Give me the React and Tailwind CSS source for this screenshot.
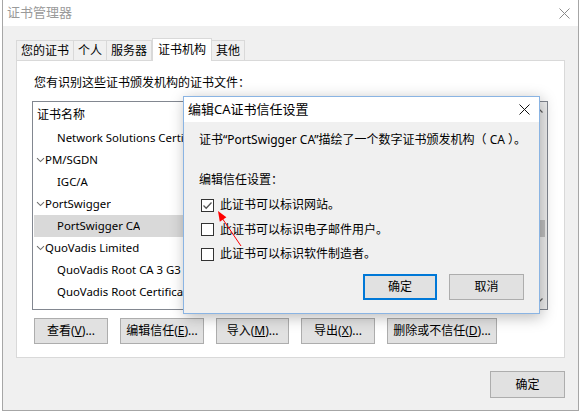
import React from "react";

const FONT = { fontFamily: '"Noto Sans", "Noto Sans CJK SC", sans-serif' };

const Chevron = () => (
  <svg width="9" height="6" viewBox="0 0 9 6" className="shrink-0">
    <path d="M1 1.2 L4.5 4.6 L8 1.2" fill="none" stroke="#707070" strokeWidth="1.1" />
  </svg>
);

const WinButton = ({ children, className = "" }) => (
  <div
    className={`flex items-center justify-center h-[26px] bg-[#e1e1e1] border border-[#adadad] text-[12px] text-black ${className}`}
  >
    {children}
  </div>
);

const rows = [
  { type: "child", label: "Network Solutions Certificate Authority" },
  { type: "parent", label: "PM/SGDN" },
  { type: "child", label: "IGC/A" },
  { type: "parent", label: "PortSwigger" },
  { type: "child", label: "PortSwigger CA", selected: true },
  { type: "parent", label: "QuoVadis Limited" },
  { type: "child", label: "QuoVadis Root CA 3 G3" },
  { type: "child", label: "QuoVadis Root Certification Authority" },
];

const tabs = ["您的证书", "个人", "服务器", "证书机构", "其他"];

const CheckRow = ({ checked, children }) => (
  <div className="flex items-center h-[24.5px] pl-[2px]">
    <div className="w-[13px] h-[13px] border border-[#333333] bg-white flex items-center justify-center">
      {checked && (
        <svg width="11" height="11" viewBox="0 0 11 11">
          <path d="M1.5 5.5 L4.2 8.2 L9.5 2.5" fill="none" stroke="#555555" strokeWidth="1.3" />
        </svg>
      )}
    </div>
    <span className="ml-[6px] text-[12px] text-black">{children}</span>
  </div>
);

export default function App() {
  return (
    <div className="relative w-[582px] h-[413px] bg-white overflow-hidden" style={FONT}>
      <div className="ml-[2px] w-[577px] h-[411px] border-x border-b border-[#a6a6a6] flex flex-col">
        {/* Title bar */}
        <div className="h-[26px] bg-white flex items-center justify-between pl-[4px] pr-[8px]">
          <span className="text-[13px] text-[#9a9a9a]">证书管理器</span>
          <svg width="11" height="11" viewBox="0 0 11 11">
            <path d="M0.5 0.5 L10.5 10.5 M10.5 0.5 L0.5 10.5" stroke="#8a8a8a" strokeWidth="1" />
          </svg>
        </div>

        {/* Body */}
        <div className="flex-1 bg-[#f0f0f0] pl-[13px] pr-[13px] pt-[12px]">
          {/* Tabs */}
          <div className="flex items-end h-[22px] relative z-10">
            {tabs.map((t) =>
              t === "证书机构" ? (
                <div
                  key={t}
                  className="h-[23px] -mb-px px-[5px] bg-white border border-b-0 border-[#d9d9d9] flex items-center text-[12px] text-black"
                >
                  {t}
                </div>
              ) : (
                <div
                  key={t}
                  className="h-[20px] px-[4px] bg-[#f0f0f0] border border-b-0 border-[#d9d9d9] -ml-px first:ml-0 flex items-center text-[12px] text-black"
                >
                  {t}
                </div>
              )
            )}
          </div>

          {/* Tab panel */}
          <div className="h-[298px] bg-white border border-[#d9d9d9] px-[15px] pt-[14px]">
            <div className="pl-[2px] text-[12px] leading-[16px] text-black">
              您有识别这些证书颁发机构的证书文件：
            </div>

            {/* Tree list */}
            <div className="mt-[10px] w-[516px] h-[209px] border border-[#828790] flex">
              <div className="flex-1 overflow-hidden">
                <div className="h-[25px] flex items-center pl-[4px] text-[12px] text-black">证书名称</div>
                {rows.map((r) =>
                  r.type === "parent" ? (
                    <div key={r.label} className="h-[22px] flex items-center pl-[3px] text-[11.4px] text-black whitespace-nowrap">
                      <Chevron />
                      <span className="max-w-[137px] overflow-hidden">{r.label}</span>
                    </div>
                  ) : (
                    <div
                      key={r.label}
                      className={`h-[22px] flex items-center pl-[23px] ml-px text-[11.4px] text-black whitespace-nowrap ${
                        r.selected ? "bg-[#d9d9d9]" : ""
                      }`}
                    >
                      <span className="max-w-[126px] overflow-hidden">{r.label}</span>
                    </div>
                  )
                )}
              </div>
              {/* Scrollbar */}
              <div className="w-[17px] bg-[#f0f0f0] flex flex-col">
                <div className="h-[17px] flex items-center justify-center">
                  <svg width="9" height="5" viewBox="0 0 9 5">
                    <path d="M0.5 4.5 L4.5 0.5 L8.5 4.5" fill="none" stroke="#606060" strokeWidth="1.2" />
                  </svg>
                </div>
                <div className="flex-1 pt-[101px]">
                  <div className="mx-[2px] h-[17px] bg-[#c1c1c1]" />
                </div>
                <div className="h-[17px] flex items-center justify-center">
                  <svg width="9" height="5" viewBox="0 0 9 5">
                    <path d="M0.5 0.5 L4.5 4.5 L8.5 0.5" fill="none" stroke="#606060" strokeWidth="1.2" />
                  </svg>
                </div>
              </div>
            </div>

            {/* Action buttons */}
            <div className="mt-[8px] ml-[2px] flex gap-[12px]">
              <WinButton className="w-[74px]">查看(<u>V</u>)...</WinButton>
              <WinButton className="w-[84px]">编辑信任(<u>E</u>)...</WinButton>
              <WinButton className="w-[73px]">导入(<u>M</u>)...</WinButton>
              <WinButton className="w-[74px]">导出(<u>X</u>)...</WinButton>
              <WinButton className="w-[110px]">删除或不信任(<u>D</u>)...</WinButton>
            </div>
          </div>

          {/* Footer */}
          <div className="mt-[13px] flex justify-end">
            <WinButton className="w-[75px] h-[27px]">确定</WinButton>
          </div>
        </div>
      </div>

      {/* Edit trust dialog */}
      <div className="absolute left-[183px] top-[96px] w-[357px] h-[218px] border border-[#8ab4e3] bg-[#f0f0f0] flex flex-col shadow-[2px_3px_14px_rgba(0,0,0,0.28)]">
        <div className="h-[25px] bg-white flex items-center justify-between pl-[4px] pr-[9px]">
          <span className="text-[13px] text-black">编辑CA证书信任设置</span>
          <svg width="11" height="11" viewBox="0 0 11 11">
            <path d="M0.5 0.5 L10.5 10.5 M10.5 0.5 L0.5 10.5" stroke="#111111" strokeWidth="1" />
          </svg>
        </div>
        <div className="flex-1 flex flex-col pl-[15px] pr-[15px] pt-[10px] pb-[13px]">
          <div className="text-[12px] leading-[16px] text-black whitespace-nowrap">
            证书“PortSwigger CA”描绘了一个数字证书颁发机构（ CA ）。
          </div>
          <div className="mt-[24px] text-[12px] leading-[16px] text-black">编辑信任设置：</div>
          <div className="mt-[5px] flex flex-col">
            <CheckRow checked>此证书可以标识网站。</CheckRow>
            <CheckRow>此证书可以标识电子邮件用户。</CheckRow>
            <CheckRow>此证书可以标识软件制造者。</CheckRow>
          </div>
          <div className="mt-auto flex justify-end gap-[12px]">
            <div className="w-[74px] h-[26px] flex items-center justify-center bg-[#e1e1e1] border-2 border-[#0078d7] text-[12px] text-black">
              确定
            </div>
            <WinButton className="w-[75px]">取消</WinButton>
          </div>
        </div>
      </div>

      {/* Red annotation arrow */}
      <svg className="absolute left-0 top-0 pointer-events-none" width="582" height="413">
        <line x1="241" y1="246" x2="222" y2="218" stroke="#ff0000" strokeWidth="1" />
        <polygon points="218,211 226.4,217.2 219.8,221.8" fill="#ff0000" />
      </svg>
    </div>
  );
}
